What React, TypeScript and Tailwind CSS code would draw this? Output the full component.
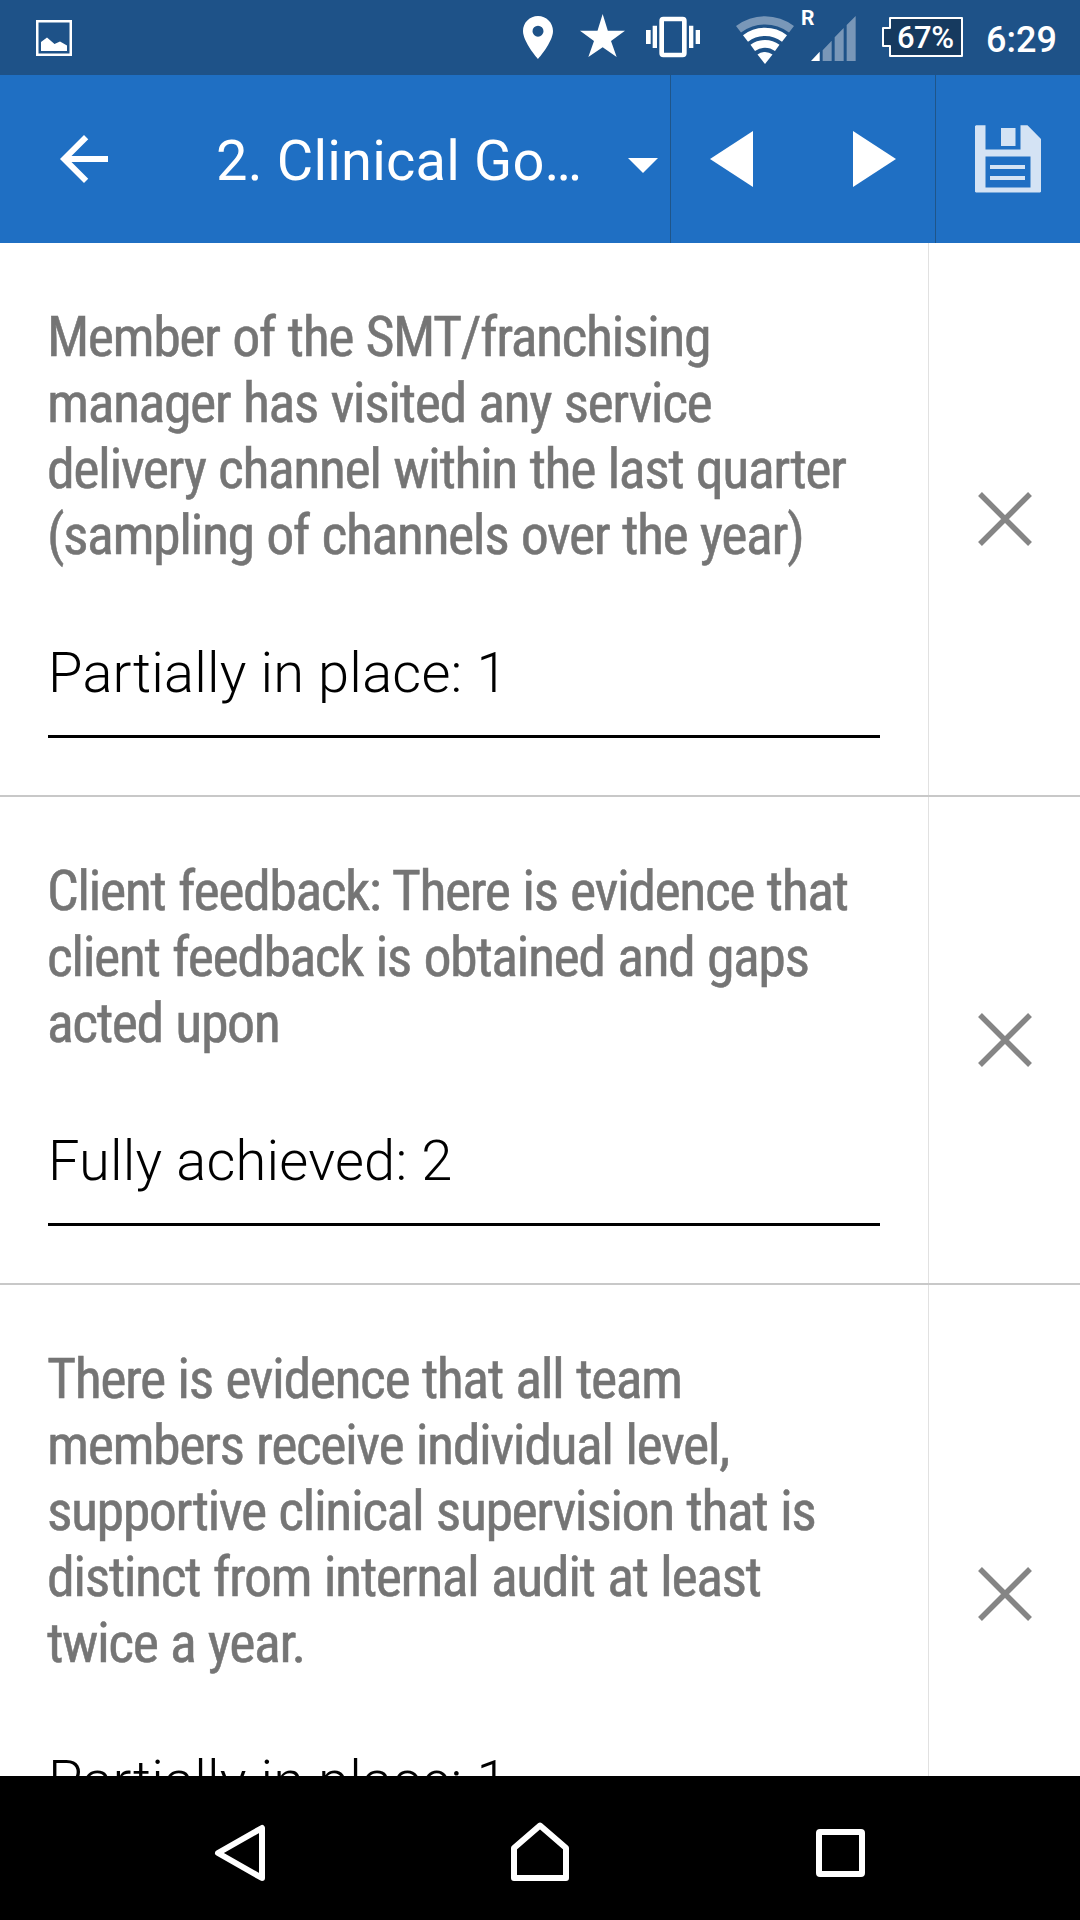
const rows = [
  {
    lines: [
      "Member of the SMT/franchising",
      "manager has visited any service",
      "delivery channel within the last quarter",
      "(sampling of channels over the year)",
    ],
    value: "Partially in place: 1",
  },
  {
    lines: ["Client feedback: There is evidence that", "client feedback is obtained and gaps", "acted upon"],
    value: "Fully achieved: 2",
  },
  {
    lines: [
      "There is evidence that all team",
      "members receive individual level,",
      "supportive clinical supervision that is",
      "distinct from internal audit at least",
      "twice a year.",
    ],
    value: "Partially in place: 1",
  },
];

function StatusBar() {
  return (
    <div className="flex h-[75px] shrink-0 items-start bg-[#1e5288] text-white">
      <svg className="mt-5 ml-9 h-9 w-9" viewBox="0 0 36 36">
        <rect x="1.25" y="1.25" width="33.5" height="33.5" fill="none" stroke="white" strokeWidth="2.5" />
        <path d="M5 22L11 17.5L18.5 24L24 21.5L31 25.5V31H5Z" fill="white" />
      </svg>
      <svg className="mt-4 ml-[451px] h-[43px] w-[30px]" viewBox="0 0 30 43" fill="white">
        <path fillRule="evenodd" d="M15 0C6.7 0 0 6.7 0 15C0 26 15 43 15 43S30 26 30 15C30 6.700 23.300 0 15 0ZM15 9.700A5.500 5.500 0 1 1 15 20.700A5.500 5.500 0 1 1 15 9.700Z" />
      </svg>
      <svg className="mt-3.5 ml-[27px] h-[43px] w-[45px]" viewBox="240 43 135 129" fill="white">
        <path d="M308 43L323.500 93H375L333 124L350 172L308 143L265 172L282 124L240 93H292.500Z" />
      </svg>
      <svg className="mt-4 ml-[21px] h-[42px] w-[54px]" viewBox="438 48 162 126" fill="white">
        <path d="M438 90h14v42h-14zM458 77h13v67h-13zM567 77h13v67h-13zM587 90h13v42h-13z" />
        <rect x="485" y="57" width="68" height="108" rx="5" fill="none" stroke="white" strokeWidth="14" />
      </svg>
      <svg className="mt-4 ml-9 h-12 w-[58px]" viewBox="708 48 174 144" fill="white">
        <path fill="#7997b8" d="M708 78A144 144 0 0 1 882 78L867 97.500A119 119 0 0 0 723 97.500Z" />
        <path d="M729 105.500A109 109 0 0 1 861 105.500L846 125A84 84 0 0 0 744 125Z" />
        <path d="M751.500 134.500A72 72 0 0 1 838.500 134.500L825 153A50 50 0 0 0 765 153Z" />
        <path d="M772.500 163.500A37 37 0 0 1 817.500 163.500L795 192Z" />
      </svg>
      <div className="mt-2 ml-[7px] w-[14px] text-[21px] leading-[21px] font-bold">R</div>
      <svg className="mt-4 -ml-[4px] h-[45px] w-[45px]" viewBox="94 48 135 135" fill="#7997b8">
        <path fill="white" d="M94 183L120 155V183Z" />
        <path d="M129 183V151L156 122V183ZM165 183V112L192 84V183ZM201 183V75L228 48V183Z" />
      </svg>
      <div className="mt-[17px] ml-[26px] grid h-10 w-[81px]">
        <svg className="col-start-1 row-start-1 h-10 w-[81px]" viewBox="0 0 81 40">
          <path d="M8 1H80V39H8V29H1V11H8Z" fill="#163a5f" stroke="white" strokeWidth="2" strokeLinejoin="round" />
        </svg>
        <span className="col-start-1 row-start-1 mt-[3px] ml-[15px] text-[31px] leading-[36px] font-medium tracking-[-0.5px]">67%</span>
      </div>
      <span className="mt-[19px] ml-[23px] text-[36px] leading-[42px] font-medium">6:29</span>
    </div>
  );
}

function Toolbar() {
  return (
    <div className="flex h-[168px] shrink-0 bg-[#1f6fc3] text-white">
      <div className="flex w-[671px] items-center border-r border-[#1f5589]">
        <svg className="ml-12 h-[72px] w-[72px]" viewBox="0 0 24 24" fill="white">
          <path d="M20 11H7.830l5.590-5.590L12 4l-8 8 8 8 1.410-1.410L7.830 13H20v-2z" />
        </svg>
        <h1 className="mt-[3px] ml-24 text-[56px] leading-[66px] tracking-[0.2px] whitespace-nowrap">2. Clinical Go…</h1>
        <svg className="mt-[13px] mr-[12px] ml-auto h-[15px] w-[30px]" viewBox="0 0 30 15" fill="white">
          <path d="M0 0H30L15 15Z" />
        </svg>
      </div>
      <div className="flex w-[265px] items-center border-r border-[#1f5589]">
        <svg className="ml-[39px] h-14 w-[43px]" viewBox="0 0 43 56" fill="white">
          <path d="M43 0V56L0 28Z" />
        </svg>
        <svg className="ml-[100px] h-14 w-[43px]" viewBox="0 0 43 56" fill="white">
          <path d="M0 0V56L43 28Z" />
        </svg>
      </div>
      <svg className="mt-[50px] ml-[39px] h-[68px] w-[66px]" viewBox="975 125 66 68" fill="#d4e3f4">
        <path
          fillRule="evenodd"
          d="M976 125.300H985.500V149.500H1020.500V125.300H1027.500L1041 139V191.700L1040 192.600H976L975 191.700V126.300ZM985.500 156.500V187.500H1030.500V156.500Z"
        />
        <path d="M1001 128H1015.500V146H1001ZM990 165H1025V169H990ZM990 176H1025V180H990Z" />
      </svg>
    </div>
  );
}

function NavBar() {
  return (
    <div className="flex h-36 shrink-0 items-start bg-black">
      <svg className="mt-[48px] ml-[214px] h-[58px] w-[52px]" viewBox="214 1824 52 58" fill="none" stroke="white" strokeWidth="6" strokeLinejoin="round">
        <path d="M218 1853L262 1828V1878Z" />
      </svg>
      <svg className="mt-[46px] ml-[245px] h-[59px] w-[58px]" viewBox="511 1822 58 59" fill="none" stroke="white" strokeWidth="6" strokeLinejoin="round">
        <path d="M540 1825.500L514 1848V1878H566V1848Z" />
      </svg>
      <div className="mt-[53px] ml-[247px] h-12 w-[49px] rounded-[4px] border-6 border-white" />
    </div>
  );
}

export default function App() {
  return (
    <div className="flex h-[1920px] w-[1080px] flex-col overflow-hidden bg-white font-[Roboto,sans-serif]">
      <StatusBar />
      <Toolbar />
      <div className="min-h-0 flex-1 overflow-hidden">
        {rows.map((row, i) => (
          <div key={i} className="flex border-b-2 border-[#c8c8c8]">
            <div className="w-[929px] border-r border-[#e1e1e1] pt-[61px] pr-12 pb-[57px] pl-12">
              {row.lines.map((line) => (
                <div
                  key={line}
                  className="-ml-px h-[66px] text-[56px] leading-[66px] font-normal tracking-[-1.5px] [word-spacing:1.2px] whitespace-nowrap text-[#757575] [font-stretch:75%] [-webkit-text-stroke:0.5px_#757575]"
                >
                  {line}
                </div>
              ))}
              <div className="mt-[72px] border-b-3 border-black pb-[29px] text-[56px] leading-[66px] font-light tracking-[0.2px] text-black">
                {row.value}
              </div>
            </div>
            <div className="flex flex-1 items-center justify-center">
              <svg className="h-[54px] w-[54px]" viewBox="0 0 54 54" stroke="#858585" strokeWidth="5.500">
                <path d="M2 2L52 52M52 2L2 52" />
              </svg>
            </div>
          </div>
        ))}
      </div>
      <NavBar />
    </div>
  );
}
